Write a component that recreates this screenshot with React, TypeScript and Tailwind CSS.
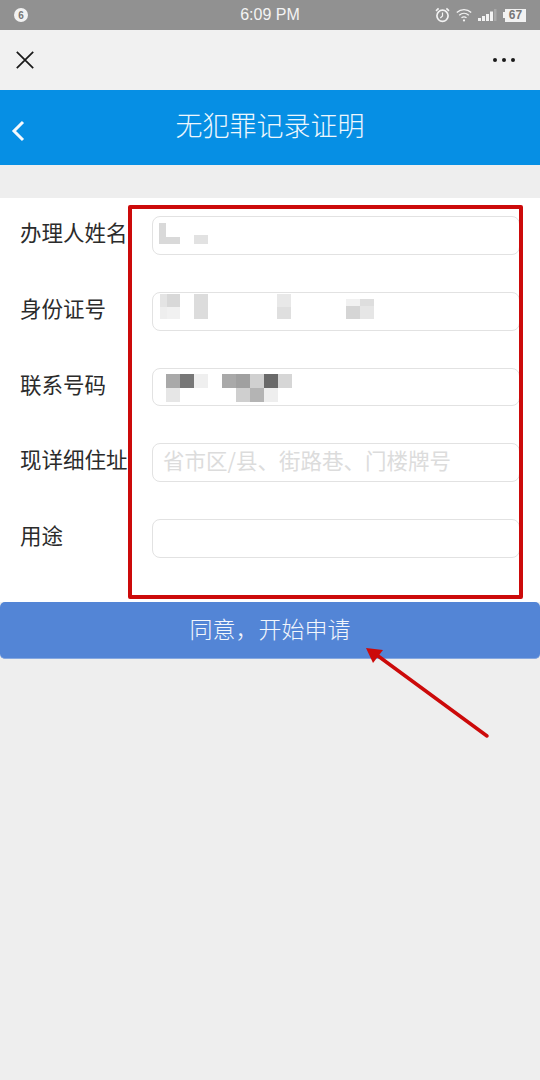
// App.tsx
const cjk = "font-['Noto_Sans_CJK_SC','Liberation_Sans',sans-serif]";

type Cell = [number, number, number, number, string];

// pixelated blocks that hide the personal data, x/y relative to the input
const nameCells: Cell[] = [
  [7, 7, 7, 14, "#d9d9d9"],
  [7, 21, 21, 7, "#d9d9d9"],
  [42, 19, 14, 9, "#e2e2e2"],
];
const idCells: Cell[] = [
  [8, 2, 7, 13, "#e4e4e4"],
  [15, 2, 13, 13, "#d8d8d8"],
  [8, 15, 7, 12, "#eeeeee"],
  [15, 15, 13, 12, "#f1f1f1"],
  [42, 2, 14, 25, "#dcdcdc"],
  [125, 2, 14, 13, "#e8e8e8"],
  [125, 15, 14, 12, "#dfdfdf"],
  [194, 7, 14, 7, "#f1f1f1"],
  [208, 7, 14, 7, "#dedede"],
  [194, 14, 14, 13, "#d5d5d5"],
  [208, 14, 14, 13, "#e6e6e6"],
];
const phoneCells: Cell[] = [
  [14, 6, 14, 14, "#a9a9a9"],
  [28, 6, 14, 14, "#777777"],
  [42, 6, 14, 14, "#efefef"],
  [14, 20, 14, 14, "#e6e6e6"],
  [70, 6, 14, 14, "#a9a9a9"],
  [84, 6, 14, 14, "#a0a0a0"],
  [98, 6, 14, 14, "#d0d0d0"],
  [112, 6, 14, 14, "#696969"],
  [126, 6, 14, 14, "#d6d6d6"],
  [84, 20, 14, 14, "#cfcfcf"],
  [98, 20, 14, 14, "#b4b4b4"],
  [112, 20, 14, 14, "#eeeeee"],
];

const Mosaic = ({ cells }: { cells: Cell[] }) => (
  <svg className="absolute left-0 top-0 size-full blur-[0.5px]" aria-hidden="true">
    {cells.map(([x, y, w, h, fill]) => (
      <rect key={`${x}-${y}`} x={x} y={y} width={w} height={h} fill={fill} />
    ))}
  </svg>
);

const StatusBar = () => (
  <div className="relative flex h-[30px] items-center justify-between bg-[#919191] pl-[14px] pr-[14px] text-white">
    <span className="flex size-[14px] items-center justify-center rounded-full bg-[#f2f2f2] font-['Liberation_Sans',sans-serif] text-[10px] font-bold text-[#777]">
      6
    </span>
    <span className="absolute left-0 right-0 text-center font-['Liberation_Sans',sans-serif] text-[16px] font-medium text-[#f4f4f4]">
      6:09 PM
    </span>
    <div className="flex items-center">
      <svg width="15" height="16" viewBox="0 0 15 16" fill="none" stroke="#f2f2f2" className="mr-[6px]">
        <circle cx="7.5" cy="8.8" r="5.6" strokeWidth="1.7" />
        <path d="M7.5 5.6v3.4L5.3 11" strokeWidth="1.2" />
        <path d="M1 3.8 3.6 1.4M14 3.8l-2.6-2.4" strokeWidth="1.7" />
      </svg>
      <svg width="16" height="14" viewBox="0 0 16 14" fill="none" stroke="#f2f2f2" strokeWidth="1.3" className="mr-[6px]">
        <path d="M0.8 4.4c4.1-3.8 10.3-3.8 14.4 0" />
        <path d="M3.2 7.2c2.8-2.5 6.8-2.5 9.6 0" />
        <path d="M5.5 9.8c1.5-1.2 3.5-1.2 5 0" />
        <circle cx="8" cy="12.4" r="1.1" fill="#f2f2f2" stroke="none" />
      </svg>
      <svg width="19" height="12" viewBox="0 0 19 12" className="mr-[6px]">
        <rect x="0" y="9" width="3" height="3" fill="#f2f2f2" />
        <rect x="4" y="7" width="3" height="5" fill="#f2f2f2" />
        <rect x="8" y="5" width="3" height="7" fill="#f2f2f2" />
        <rect x="12" y="2.5" width="3" height="9.5" fill="#f2f2f2" />
        <rect x="16" y="0" width="2.5" height="12" fill="#a8a8a8" />
      </svg>
      <div className="flex items-center">
        <span className="h-[6px] w-[2px] bg-[#f2f2f2]" />
        <span className="flex h-[13px] w-[21px] items-center justify-center bg-[#f2f2f2] font-['Liberation_Sans',sans-serif] text-[12px] font-bold text-[#777]">
          67
        </span>
      </div>
    </div>
  </div>
);

const TopBar = () => (
  <div className="flex h-[60px] items-center justify-between bg-[#f1f1f1] pl-[16px] pr-[25px]">
    <svg width="18" height="18" viewBox="0 0 18 18" stroke="#1a1a1a" strokeWidth="1.7" fill="none">
      <path d="M0.8 0.8 17.2 17.2M17.2 0.8 0.8 17.2" />
    </svg>
    <div className="flex gap-[5px]">
      <span className="size-[4px] rounded-full bg-[#1a1a1a]" />
      <span className="size-[4px] rounded-full bg-[#1a1a1a]" />
      <span className="size-[4px] rounded-full bg-[#1a1a1a]" />
    </div>
  </div>
);

const Header = () => (
  <div className="relative flex h-[75px] items-center justify-center bg-[#068fe4] pb-[6px]">
    <svg className="absolute left-[11px] top-[30px]" width="14" height="22" viewBox="0 0 14 22" fill="none" stroke="#f4f9fd" strokeWidth="3">
      <path d="M12 2 3 11l9 9" />
    </svg>
    <h1 className={`${cjk} text-[27px] font-light leading-none text-[#eef7fd]`}>无犯罪记录证明</h1>
  </div>
);

const Field = ({
  label,
  placeholder,
  cells,
}: {
  label: string;
  placeholder?: string;
  cells?: Cell[];
}) => (
  <div className="flex h-[38.75px] items-center pl-[20px] pr-[20px]">
    <label className={`${cjk} w-[132px] shrink-0 whitespace-nowrap pb-[7px] text-[21.5px] leading-none text-[#2b2b2b]`}>
      {label}
    </label>
    <div className="relative h-full flex-1">
      <input
        readOnly
        placeholder={placeholder}
        className={`${cjk} size-full rounded-[8px] border-[1.5px] border-[#e2e2e2] bg-white pb-[6px] pl-[10px] text-[21.5px] outline-none placeholder:text-[#dcdcdc]`}
      />
      {cells && <Mosaic cells={cells} />}
    </div>
  </div>
);

const Arrow = () => (
  <svg className="absolute left-[360px] top-[640px]" width="135" height="105" viewBox="0 0 135 105" fill="none">
    <path d="M127 96 14 13" stroke="#cc0a0a" strokeWidth="3.5" strokeLinecap="round" />
    <path d="M6 8 23 10 13 23Z" fill="#cc0a0a" />
  </svg>
);

export default function App() {
  return (
    <div className="relative flex min-h-[1080px] flex-col bg-[#eeeeee]">
      <StatusBar />
      <TopBar />
      <Header />
      <form className="mt-[33px] flex h-[404px] flex-col gap-[37px] bg-white pt-[18px]">
        <Field label="办理人姓名" cells={nameCells} />
        <Field label="身份证号" cells={idCells} />
        <Field label="联系号码" cells={phoneCells} />
        <Field label="现详细住址" placeholder="省市区/县、街路巷、门楼牌号" />
        <Field label="用途" />
      </form>
      <button
        type="button"
        className={`${cjk} h-[57px] w-full rounded-[5px] border-b border-[#86a8e0] bg-[#5385d6] pb-[3px] text-[23px] font-light text-[#f2f6fc]`}
      >
        同意，开始申请
      </button>
      {/* red annotations drawn on top of the screenshot */}
      <div className="absolute left-[128px] top-[205px] h-[394px] w-[395px] rounded-[2px] border-[4px] border-[#cc0a0a]" />
      <Arrow />
    </div>
  );
}
